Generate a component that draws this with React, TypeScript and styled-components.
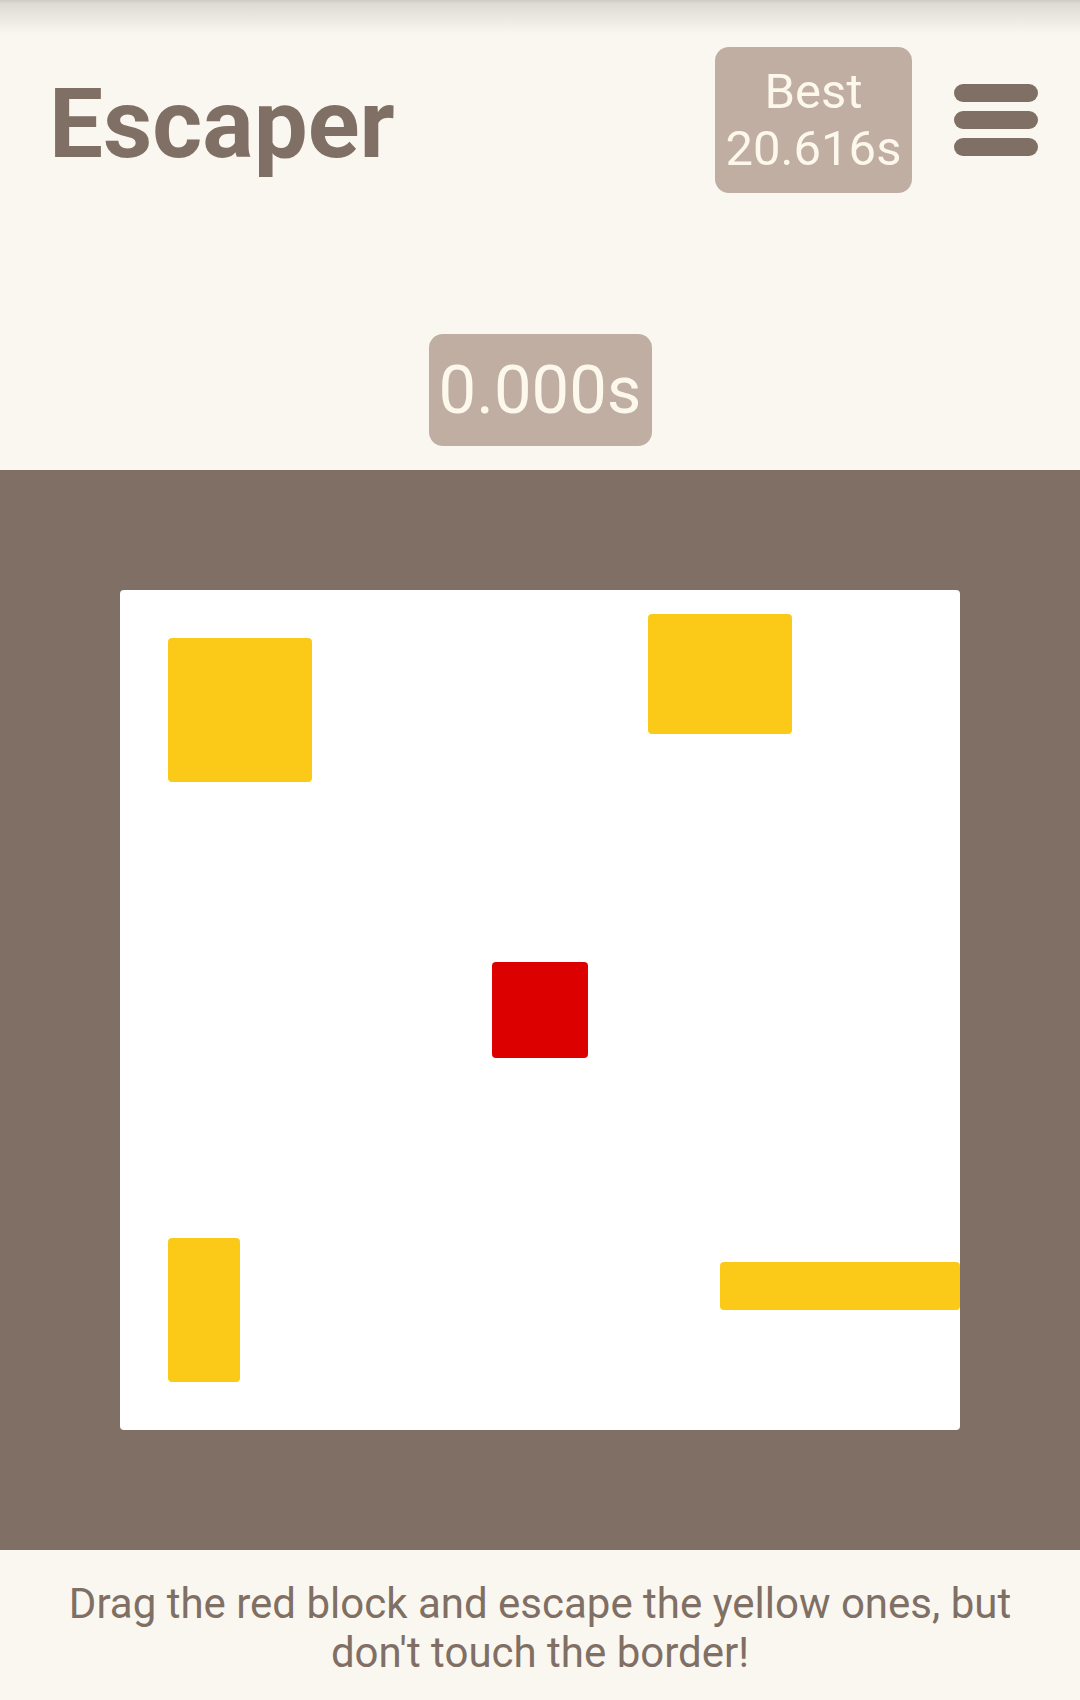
import styled, { createGlobalStyle } from "styled-components";

const GlobalStyle = createGlobalStyle`
  html, body {
    margin: 0;
    padding: 0;
    background: #faf7f0;
  }
  body {
    font-family: Roboto, "Liberation Sans", sans-serif;
  }
`;

const Page = styled.div`
  width: 1080px;
  height: 1700px;
  background: #faf7f0;
  display: flex;
  flex-direction: column;
  overflow: hidden;
`;

const TopShade = styled.div`
  height: 34px;
  background: linear-gradient(#cfccc6 0px, #dedbd4 4px, #faf7f0 34px);
`;

const Header = styled.header`
  display: flex;
  align-items: center;
  height: 146px;
  margin-top: 13px;
  padding: 0 42px 0 49px;
`;

const Title = styled.h1`
  margin: 8px 0 0;
  flex: 1;
  font-size: 96px;
  line-height: 1;
  font-weight: 700;
  color: #806f65;
`;

const ScoreBox = styled.div<{ $width: number; $height: number; $size: number; $line: number }>`
  width: ${(p) => p.$width}px;
  height: ${(p) => p.$height}px;
  display: flex;
  flex-direction: column;
  align-items: center;
  justify-content: center;
  background: #c0aea3;
  border-radius: 14px;
  color: #fdf8ec;
  font-size: ${(p) => p.$size}px;
  line-height: ${(p) => p.$line}px;
`;

const MenuButton = styled.button`
  margin-left: 42px;
  width: 84px;
  padding: 0;
  border: none;
  background: none;
  display: flex;
  flex-direction: column;
  gap: 9px;
  cursor: pointer;
`;

const MenuBar = styled.span`
  display: block;
  height: 18px;
  border-radius: 9px;
  background: #806f65;
`;

const TimerRow = styled.div`
  display: flex;
  justify-content: center;
  margin-top: 141px;
  margin-bottom: 24px;
`;

const Arena = styled.main`
  height: 1080px;
  background: #806f65;
  padding: 120px;
  box-sizing: border-box;
`;

const Board = styled.div`
  position: relative;
  width: 840px;
  height: 840px;
  background: #ffffff;
  border-radius: 4px;
`;

const Block = styled.div<{ $red?: boolean }>`
  position: absolute;
  border-radius: 4px;
  background: ${(p) => (p.$red ? "#dd0000" : "#fbca18")};
`;

const Hint = styled.p`
  margin: 0;
  padding: 29px 40px 0;
  text-align: center;
  font-size: 42px;
  line-height: 49px;
  color: #806f65;
`;

const enemies = [
  { left: 48, top: 48, width: 144, height: 144 },
  { left: 528, top: 24, width: 144, height: 120 },
  { left: 48, top: 648, width: 72, height: 144 },
  { left: 600, top: 672, width: 240, height: 48 },
];

export default function App() {
  return (
    <Page>
      <GlobalStyle />
      <TopShade />
      <Header>
        <Title>Escaper</Title>
        <ScoreBox $width={197} $height={146} $size={49} $line={57}>
          <span>Best</span>
          <span>20.616s</span>
        </ScoreBox>
        <MenuButton aria-label="Menu">
          <MenuBar />
          <MenuBar />
          <MenuBar />
        </MenuButton>
      </Header>
      <TimerRow>
        <ScoreBox $width={223} $height={112} $size={67} $line={112}>
          0.000s
        </ScoreBox>
      </TimerRow>
      <Arena>
        <Board>
          {enemies.map((e, i) => (
            <Block key={i} style={e} />
          ))}
          <Block $red style={{ left: 372, top: 372, width: 96, height: 96 }} />
        </Board>
      </Arena>
      <Hint>Drag the red block and escape the yellow ones, but don't touch the border!</Hint>
    </Page>
  );
}
